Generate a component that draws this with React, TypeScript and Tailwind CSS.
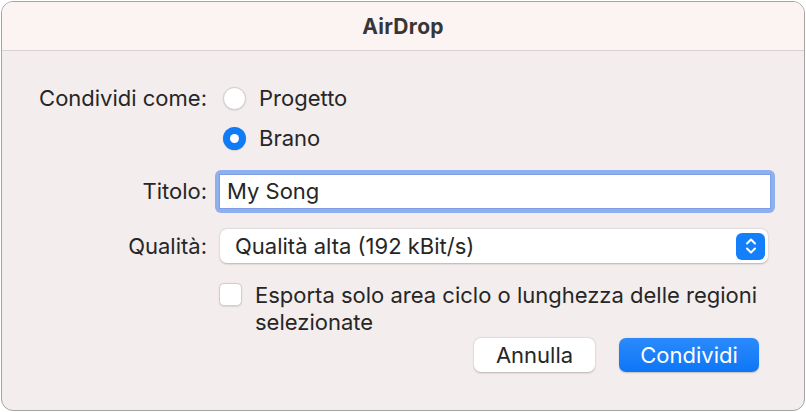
import React from "react";

function Radio({ checked }: { checked?: boolean }) {
  if (checked) {
    return (
      <div className="w-[23px] h-[23px] rounded-full bg-[#0f7bf7] flex items-center justify-center shadow-[0_0.5px_1px_rgba(0,0,0,0.2)]">
        <div className="w-[9px] h-[9px] rounded-full bg-white" />
      </div>
    );
  }
  return (
    <div className="w-[23px] h-[23px] rounded-full bg-white border border-[#cfcbcb] shadow-[0_0.5px_1.5px_rgba(0,0,0,0.12)]" />
  );
}

export default function App() {
  return (
    <div
      className="w-[806px] h-[412px] bg-white"
      style={{ fontFamily: "Inter, 'Noto Sans', sans-serif" }}
    >
      <div className="ml-[1px] mt-[1px] w-[804px] h-[410px] border border-[#a6a3a3] rounded-[12px] overflow-hidden flex flex-col bg-[#f3eded]">
        <div className="h-[49px] shrink-0 bg-[#fcf3f3] border-b border-[#d8d2d2] flex items-center justify-center pt-[2px]">
          <span className="text-[21px] font-bold text-[#363636] tracking-[0.3px]">AirDrop</span>
        </div>
        <div className="flex-1 flex flex-col text-[22px] text-[#262626]">
          <div className="flex items-center h-[28px] mt-[33px]">
            <div className="w-[205px] text-right">Condividi come:</div>
            <div className="ml-[16px]"><Radio /></div>
            <span className="ml-[13px]">Progetto</span>
          </div>
          <div className="flex items-center h-[28px] mt-[12px]">
            <div className="w-[205px]" />
            <div className="ml-[16px]"><Radio checked /></div>
            <span className="ml-[13px]">Brano</span>
          </div>
          <div className="flex items-center h-[43px] mt-[18px]">
            <div className="w-[205px] text-right">Titolo:</div>
            <div className="ml-[8px] w-[560px] h-[43px] rounded-[6px] bg-[#8eaff0] p-[4px]">
              <div className="w-full h-full bg-white border border-[#7d9fe6] flex items-center pl-[7px]">
                My Song
              </div>
            </div>
          </div>
          <div className="flex items-center h-[34px] mt-[16px]">
            <div className="w-[205px] text-right">Qualità:</div>
            <div className="ml-[13px] w-[548px] h-[34px] rounded-[7px] bg-white shadow-[0_0.5px_2px_rgba(0,0,0,0.25)] flex items-center pl-[15px] pr-[3px]">
              <span className="flex-1">Qualità alta (192 kBit/s)</span>
              <div className="w-[29px] h-[27px] rounded-[6px] bg-[#137ffa] flex items-center justify-center">
                <svg width="14" height="20" viewBox="0 0 14 20" fill="none" stroke="white" strokeWidth="2" strokeLinecap="round" strokeLinejoin="round">
                  <path d="M3 7.5 L7 3.5 L11 7.5" />
                  <path d="M3 12.5 L7 16.5 L11 12.5" />
                </svg>
              </div>
            </div>
          </div>
          <div className="flex items-start mt-[19px]">
            <div className="w-[205px]" />
            <div className="ml-[12px] mt-[1px] w-[23px] h-[23px] rounded-[5px] bg-white border border-[#d2cece] shadow-[0_0.5px_1.5px_rgba(0,0,0,0.1)]" />
            <div className="ml-[13px] leading-[27px] w-[530px]">
              Esporta solo area ciclo o lunghezza delle regioni selezionate
            </div>
          </div>
          <div className="flex justify-end pr-[45px] mt-[2px] gap-[24px]">
            <div className="w-[121px] h-[34px] rounded-[7px] bg-white shadow-[0_0.5px_2px_rgba(0,0,0,0.25)] flex items-center justify-center">
              Annulla
            </div>
            <div className="w-[140px] h-[34px] rounded-[7px] bg-gradient-to-b from-[#2a8afc] to-[#0b76f6] text-white flex items-center justify-center shadow-[0_0.5px_1.5px_rgba(0,0,0,0.2)]">
              Condividi
            </div>
          </div>
        </div>
      </div>
    </div>
  );
}
